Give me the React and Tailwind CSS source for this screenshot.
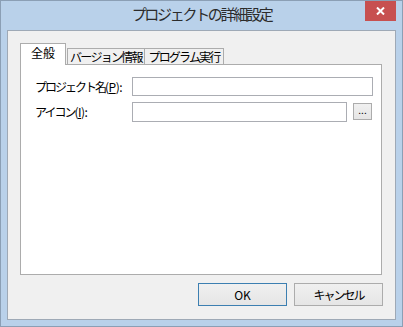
import React from 'react';

const jp = { fontFamily: '"Noto Sans CJK JP", "Noto Sans", sans-serif' };

const App = () => {
  return (
    <div
      className="w-[403px] h-[327px] border border-[#8b9fb5] bg-[#b9d1ea] flex flex-col text-[#000] whitespace-nowrap"
      style={jp}
    >

      {/* Title bar */}
      <div className="h-[29px] relative flex items-center justify-center">
        <span className="text-[15px] tracking-[-2.3px] text-[#2b2b2b] leading-none -mt-[4px]">
          プロジェクトの詳細設定
        </span>
        <div className="absolute top-0 right-[6px] w-[31px] h-[20px] bg-[#c75050] flex items-center justify-center">
          <svg width="9" height="8" viewBox="0 0 9 8">
            <path d="M1 0.5 L8 7.5 M8 0.5 L1 7.5" stroke="#fff" strokeWidth="2" />
          </svg>
        </div>
      </div>

      {/* Client area */}
      <div className="mx-[6px] mb-[6px] flex-1 border border-[#9ea9b6] bg-[#f0f0f0] flex flex-col">

        <div className="ml-[12px] mr-[13px] mt-[12px]">

          {/* Tabs */}
          <div className="flex items-end h-[21px] text-[12px] leading-none">
            <div className="relative z-10 -mb-px h-[22px] w-[46px] border border-b-0 border-[#acacac] bg-white flex items-center justify-center pb-[3px]">
              全般
            </div>
            <div className="ml-px h-[16px] w-[78px] border border-b-0 border-[#acacac] bg-[#f0f0f0] flex items-center justify-center tracking-[-1.7px]">
              バージョン情報
            </div>
            <div className="h-[16px] w-[79px] border border-b-0 border-l-0 border-[#acacac] bg-[#f0f0f0] flex items-center justify-center tracking-[-1.8px]">
              プログラム実行
            </div>
          </div>

          {/* Panel */}
          <div className="h-[211px] border border-[#acacac] bg-white pt-[12px] pl-[14px] pr-[8px] text-[12px]">

            <div className="flex items-center h-[19px]">
              <span className="w-[97px] leading-none">
                <span className="tracking-[-2px]">プロジェクト名</span>
                <span className="tracking-[-0.5px]">(<span className="underline">P</span>):</span>
              </span>
              <div className="flex-1 h-[19px] border border-[#abadb3] bg-white" />
            </div>

            <div className="flex items-center h-[19px] mt-[6px]">
              <span className="w-[97px] leading-none">
                <span className="tracking-[-2px]">アイコン</span>
                <span className="tracking-[-0.5px]">(<span className="underline">I</span>):</span>
              </span>
              <div className="w-[215px] h-[20px] border border-[#abadb3] bg-white" />
              <div className="ml-[6px] w-[19px] h-[17px] border border-[#acacac] bg-gradient-to-b from-[#f0f0f0] to-[#e5e5e5] flex items-end justify-center pb-[4px] text-[10px] leading-none">
                ...
              </div>
            </div>

          </div>

        </div>

        {/* Buttons */}
        <div className="flex justify-end gap-[7px] mt-[8px] mr-[12px] text-[12px]">
          <button className="w-[89px] h-[23px] border border-[#3c7fb1] bg-gradient-to-b from-[#f0f0f0] to-[#e5e5e5] flex items-center justify-center">
            OK
          </button>
          <button className="w-[89px] h-[23px] border border-[#acacac] bg-gradient-to-b from-[#f0f0f0] to-[#e5e5e5] flex items-center justify-center tracking-[-2px]">
            キャンセル
          </button>
        </div>

      </div>
    </div>
  );
};

export default App;
